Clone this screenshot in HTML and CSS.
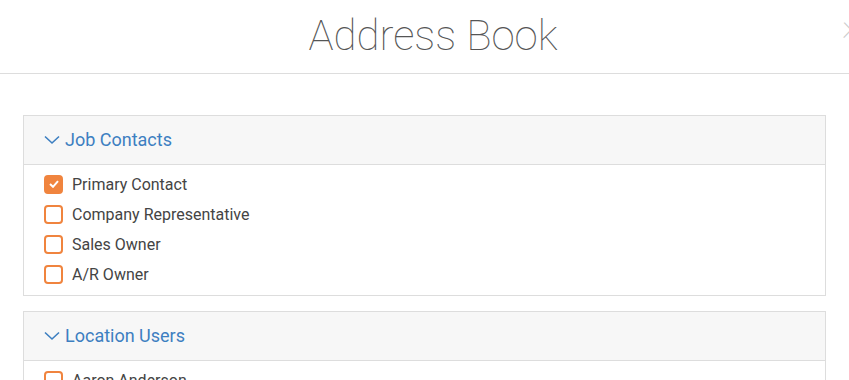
FILE: index.html
```html
<!DOCTYPE html>
<html lang="en">
<head>
    <meta charset="UTF-8">
    <meta name="viewport" content="width=device-width, initial-scale=1.0">
    <title>Address Book</title>
    <link rel="stylesheet" href="styles.css">
</head>
<body>
    <div class="modal">
        <div class="modal-header">
            <h1>Address Book</h1>
            <span class="close">&times;</span>
        </div>
        <div class="modal-body">

            <div class="panel">
                <div class="panel-heading">
                    <svg class="chevron" width="16" height="10" viewBox="0 0 16 10"><path d="M1 1.5 L8 8 L15 1.5" fill="none" stroke="#3d7fc1" stroke-width="1.6"/></svg>
                    <span>Job Contacts</span>
                </div>
                <div class="panel-list">
                    <label class="item"><span class="box checked"><svg width="10" height="8" viewBox="0 0 10 8"><path d="M1 4 L4 6.8 L9 1.2" fill="none" stroke="#fff" stroke-width="2"/></svg></span>Primary Contact</label>
                    <label class="item"><span class="box"></span>Company Representative</label>
                    <label class="item"><span class="box"></span>Sales Owner</label>
                    <label class="item"><span class="box"></span>A/R Owner</label>
                </div>
            </div>

            <div class="panel">
                <div class="panel-heading">
                    <svg class="chevron" width="16" height="10" viewBox="0 0 16 10"><path d="M1 1.5 L8 8 L15 1.5" fill="none" stroke="#3d7fc1" stroke-width="1.6"/></svg>
                    <span>Location Users</span>
                </div>
                <div class="panel-list">
                    <label class="item"><span class="box"></span>Aaron Anderson</label>
                    <label class="item"><span class="box"></span>Beth Collins</label>
                </div>
            </div>

        </div>
    </div>
</body>
</html>
```

FILE: styles.css
```css
body {
    font-family: Roboto, "Liberation Sans", sans-serif;
    background-color: #fff;
    margin: 0;
    overflow: hidden;
}
.modal {
    width: 866px;
}
.modal-header {
    position: relative;
    height: 73px;
    border-bottom: 1px solid #ddd;
    display: flex;
    align-items: center;
    justify-content: center;
}
.modal-header h1 {
    margin: 0;
    font-size: 42px;
    font-weight: 100;
    color: #555;
    padding-bottom: 2px;
}
.close {
    position: absolute;
    right: 5px;
    top: 3px;
    font-size: 38px;
    font-weight: 100;
    color: #ccc;
}
.modal-body {
    padding: 41px 23px 0 23px;
    width: 803px;
}
.panel {
    border: 1px solid #ddd;
    margin-bottom: 15px;
}
.panel-heading {
    height: 47px;
    padding-bottom: 1px;
    background-color: #f7f7f7;
    border-bottom: 1px solid #ddd;
    display: flex;
    align-items: center;
    padding-left: 20px;
    color: #3d7fc1;
    font-size: 18px;
}
.chevron {
    margin-right: 5px;
    margin-top: 1px;
}
.panel-list {
    padding: 4px 20px 6px 20px;
}
.item {
    display: flex;
    align-items: center;
    height: 30px;
    font-size: 16px;
    color: #444;
}
.box {
    width: 15px;
    height: 15px;
    border: 2px solid #f0843e;
    border-radius: 4px;
    margin-right: 9px;
    display: flex;
    align-items: center;
    justify-content: center;
}
.box.checked {
    background-color: #f0843e;
}
```
